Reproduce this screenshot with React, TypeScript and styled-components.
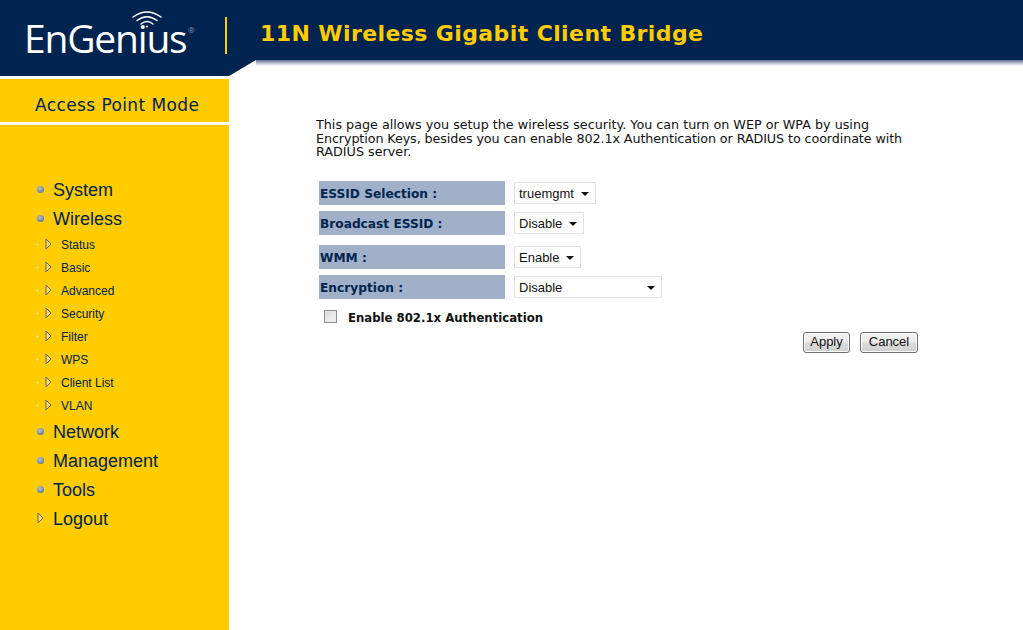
import { createGlobalStyle, styled } from "styled-components";

const GlobalStyle = createGlobalStyle`
  html, body {
    margin: 0;
    height: 100%;
    background: #fff;
    overflow: hidden;
  }
  #root {
    height: 100%;
  }
`;

const Page = styled.div`
  display: flex;
  flex-direction: column;
  height: 630px;
`;

const Banner = styled.header`
  display: flex;
  align-items: flex-start;
  height: 60px;
  flex-shrink: 0;
  background: #00234f;
`;

const Logo = styled.div`
  position: relative;
  width: 201px;
  height: 60px;
  margin-left: 24px;
  padding-top: 16px;
  box-sizing: border-box;
  color: #fff;
  font-family: "Open Sans", sans-serif;
  font-size: 39px;
  font-weight: 400;
  letter-spacing: -1.2px;
  line-height: 44px;
`;

const WifiMark = styled.svg`
  position: absolute;
  left: 108px;
  top: 10px;
`;

const Registered = styled.span`
  position: absolute;
  left: 164px;
  top: 25px;
  color: #8d99ad;
  font-size: 8px;
  font-weight: 400;
  letter-spacing: 0;
  line-height: 10px;
`;

const Divider = styled.div`
  width: 2px;
  height: 37px;
  margin-top: 17px;
  background: #ffcc00;
`;

const Title = styled.h1`
  margin: 21px 0 0 33px;
  color: #ffcc00;
  font-family: "DejaVu Sans", sans-serif;
  font-size: 22px;
  font-weight: 700;
  letter-spacing: 0.4px;
  line-height: 26px;
`;

const Body = styled.div`
  display: flex;
  flex: 1;
`;

const Sidebar = styled.aside`
  display: flex;
  flex-direction: column;
  width: 229px;
  flex-shrink: 0;
`;

const Tail = styled.div`
  position: relative;
  height: 16px;
  flex-shrink: 0;
  background: #00234f;

  &::after {
    content: "";
    position: absolute;
    left: 100%;
    top: 0;
    border-top: 16px solid #00234f;
    border-right: 27px solid transparent;
  }
`;

const ModeBox = styled.div`
  display: flex;
  align-items: center;
  height: 43px;
  margin: 3px 0;
  padding-left: 35px;
  padding-top: 9px;
  box-sizing: border-box;
  background: #ffcc00;
  color: #00234f;
  font-family: "DejaVu Sans", sans-serif;
  font-size: 17px;
  letter-spacing: 0.4px;
`;

const Menu = styled.nav`
  flex: 1;
  padding: 51px 0 0 37px;
  background: #ffcc00;
`;

const MainItem = styled.div`
  display: flex;
  align-items: center;
  height: 29px;
  color: #00234f;
  font-family: "Liberation Sans", sans-serif;
  font-size: 18px;
`;

const Bullet = styled.span`
  width: 7px;
  height: 7px;
  margin-right: 9px;
  margin-top: -3px;
  border-radius: 50%;
  background: radial-gradient(circle at 40% 35%, #b6c3d6, #6d82a3 65%, #55688a);
`;

const Arrow = styled.svg`
  flex-shrink: 0;
  overflow: visible;
`;

const LogoutArrow = styled(Arrow)`
  margin-right: 9px;
  margin-top: -3px;
`;

const SubList = styled.div`
  display: flex;
  flex-direction: column;
  margin-top: -1px;
  margin-bottom: 1px;
`;

const SubItem = styled.div`
  display: flex;
  align-items: center;
  height: 23px;
  color: #00234f;
  font-family: "Liberation Sans", sans-serif;
  font-size: 12px;

  &::before {
    content: "";
    width: 3px;
    height: 3px;
    margin-right: 6px;
    margin-left: -1px;
    background:
      linear-gradient(#ffdc55, #ffdc55) center / 3px 1px no-repeat,
      linear-gradient(#ffdc55, #ffdc55) center / 1px 3px no-repeat;
  }

  svg {
    margin-right: 9px;
    margin-top: -1px;
  }
`;

const Main = styled.main`
  flex: 1;
  display: flex;
  flex-direction: column;
`;

const Shade = styled.div`
  height: 6px;
  margin-left: 27px;
  background: linear-gradient(#5d6a8c, #c7cbd8 60%, #fff);
`;

const Content = styled.div`
  width: 602px;
  margin-left: 87px;
  padding-top: 52px;
  font-family: "DejaVu Sans", sans-serif;
`;

const Intro = styled.p`
  margin: 0 0 22.5px;
  color: #111;
  font-size: 12.74px;
  line-height: 13.5px;
  white-space: nowrap;
`;

const TightLine = styled.span`
  letter-spacing: -0.1px;
`;

const FormRow = styled.div`
  display: flex;
  align-items: center;
  height: 24px;
  margin-bottom: 6px;
  padding-left: 3px;
`;

const SpacedRow = styled(FormRow)`
  margin-bottom: 10px;
`;

const FieldLabel = styled.div`
  display: flex;
  align-items: center;
  width: 186px;
  height: 24px;
  margin-right: 9px;
  padding: 2px 0 0 1px;
  box-sizing: border-box;
  background: #9fb0c8;
  color: #00234f;
  font-size: 12.2px;
  font-weight: 700;
`;

const SelectBox = styled.div<{ $width: number }>`
  position: relative;
  width: ${(p) => p.$width}px;
  height: 22px;

  &::after {
    content: "";
    position: absolute;
    right: 7px;
    top: 10px;
    border-top: 4px solid #111;
    border-left: 4px solid transparent;
    border-right: 4px solid transparent;
    pointer-events: none;
  }
`;

const Select = styled.select`
  appearance: none;
  width: 100%;
  height: 100%;
  padding: 0 0 0 4px;
  box-sizing: border-box;
  border: 1px solid #e2e2e2;
  border-radius: 0;
  background: #fff;
  color: #111;
  font-family: "Liberation Sans", sans-serif;
  font-size: 13px;
`;

const CheckRow = styled.label`
  display: flex;
  align-items: center;
  height: 24px;
  padding-left: 8px;
  color: #111;
  font-size: 11.7px;
  font-weight: 700;
`;

const CheckBox = styled.span`
  width: 13px;
  height: 13px;
  margin-right: 11px;
  margin-top: -1px;
  box-sizing: border-box;
  border: 1px solid #8e8f8f;
  background: linear-gradient(135deg, #d8d9da, #f7f7f8);
  box-shadow: inset 0 0 0 1px #e9e9ea;
`;

const CheckText = styled.span`
  padding-top: 2px;
`;

const Actions = styled.div`
  display: flex;
  justify-content: flex-end;
  gap: 10px;
  margin-top: 3px;
`;

const Button = styled.button<{ $width: number }>`
  width: ${(p) => p.$width}px;
  height: 21px;
  padding: 0 0 2px;
  border: 1px solid #707070;
  border-radius: 3px;
  background: linear-gradient(#f2f2f2 0%, #ebebeb 48%, #dcdcdc 52%, #cfcfcf 100%);
  box-shadow: inset 0 0 0 1px #fbfbfb;
  color: #111;
  font-family: "Liberation Sans", sans-serif;
  font-size: 13px;
`;

const SUB_ITEMS = ["Status", "Basic", "Advanced", "Security", "Filter", "WPS", "Client List", "VLAN"];

function TriangleIcon() {
  return (
    <Arrow width="7" height="12" viewBox="0 0 7 12">
      <path d="M1 1 L6 6 L1 11 Z" fill="#ffdc55" stroke="#66627a" strokeWidth="1" />
    </Arrow>
  );
}

function Field({ label, value, width }: { label: string; value: string; width: number }) {
  return (
    <>
      <FieldLabel>{label}</FieldLabel>
      <SelectBox $width={width}>
        <Select defaultValue={value}>
          <option>{value}</option>
        </Select>
      </SelectBox>
    </>
  );
}

function App() {
  return (
    <Page>
      <GlobalStyle />
      <Banner>
        <Logo>
          <WifiMark width="30" height="18" viewBox="0 0 30 18" fill="none" stroke="#fff" strokeLinecap="round">
            <path d="M1 7 Q15 -3 29 7" strokeWidth="1.4" />
            <path d="M5 10.5 Q15 3 25 10.5" strokeWidth="1.4" />
            <path d="M9 14 Q15 9 21 14" strokeWidth="1.4" />
            <circle cx="15" cy="16.5" r="1" fill="#fff" stroke="none" />
          </WifiMark>
          EnGenius
          <Registered>®</Registered>
        </Logo>
        <Divider />
        <Title>11N Wireless Gigabit Client Bridge</Title>
      </Banner>
      <Body>
        <Sidebar>
          <Tail />
          <ModeBox>Access Point Mode</ModeBox>
          <Menu>
            <MainItem><Bullet />System</MainItem>
            <MainItem><Bullet />Wireless</MainItem>
            <SubList>
              {SUB_ITEMS.map((item) => (
                <SubItem key={item}>
                  <TriangleIcon />
                  {item}
                </SubItem>
              ))}
            </SubList>
            <MainItem><Bullet />Network</MainItem>
            <MainItem><Bullet />Management</MainItem>
            <MainItem><Bullet />Tools</MainItem>
            <MainItem>
              <LogoutArrow width="7" height="12" viewBox="0 0 7 12">
                <path d="M1 1 L6 6 L1 11 Z" fill="#ffdc55" stroke="#66627a" strokeWidth="1" />
              </LogoutArrow>
              Logout
            </MainItem>
          </Menu>
        </Sidebar>
        <Main>
          <Shade />
          <Content>
            <Intro>
              This page allows you setup the wireless security. You can turn on WEP or WPA by using
              <br />
              <TightLine>Encryption Keys, besides you can enable 802.1x Authentication or RADIUS to coordinate with</TightLine>
              <br />
              RADIUS server.
            </Intro>
            <FormRow><Field label="ESSID Selection :" value="truemgmt" width={82} /></FormRow>
            <SpacedRow><Field label="Broadcast ESSID :" value="Disable" width={70} /></SpacedRow>
            <FormRow><Field label="WMM :" value="Enable" width={67} /></FormRow>
            <FormRow><Field label="Encryption :" value="Disable" width={148} /></FormRow>
            <CheckRow>
              <CheckBox />
              <CheckText>Enable 802.1x Authentication</CheckText>
            </CheckRow>
            <Actions>
              <Button $width={47}>Apply</Button>
              <Button $width={58}>Cancel</Button>
            </Actions>
          </Content>
        </Main>
      </Body>
    </Page>
  );
}

export default App;
